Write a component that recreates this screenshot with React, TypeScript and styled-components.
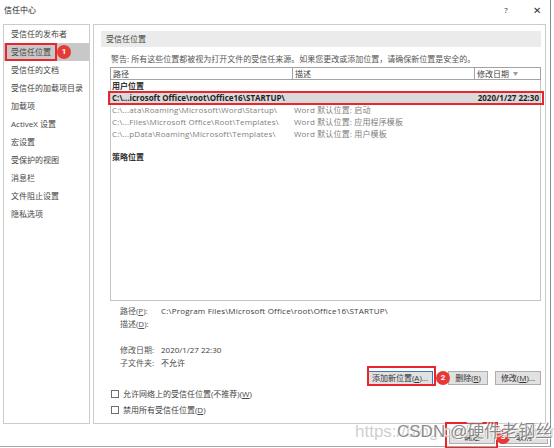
import React from "react";
import styled, { createGlobalStyle } from "styled-components";

const GlobalStyle = createGlobalStyle`
  html, body { margin: 0; padding: 0; background: #fff; }
  body {
    width: 554px; height: 448px; overflow: hidden;
    font-family: "Open Sans", "Noto Sans CJK SC", sans-serif;
    font-size: 8px; color: #3c3c3c;
  }
`;

const Window = styled.div`
  position: relative;
  width: 551px;
  height: 447px;
  box-sizing: border-box;
  border-right: 1px solid #8c8c8c;
  border-bottom: 1px solid #a6a6a6;
  display: flex;
  flex-direction: column;
  background: #fff;
`;

const TitleBar = styled.div`
  height: 24px;
  box-sizing: border-box;
  padding: 4px 7px 0 4px;
  display: flex;
  justify-content: space-between;
  align-items: flex-start;
`;

const Title = styled.span`
  line-height: 12px;
  color: #222;
`;

const TitleButtons = styled.div`
  display: flex;
  gap: 19px;
`;

const TitleButton = styled.span<{ $size?: number }>`
  width: 12px;
  text-align: center;
  line-height: 12px;
  color: #333;
  font-size: ${(p) => p.$size ?? 8}px;
`;

const Body = styled.div`
  display: flex;
  gap: 3px;
  padding-left: 3px;
  height: 400px;
`;

const Nav = styled.div`
  width: 87px;
  box-sizing: border-box;
  border: 1px solid #cbcbcb;
  display: flex;
  flex-direction: column;
`;

const NavItem = styled.div<{ $active?: boolean }>`
  position: relative;
  height: 18px;
  line-height: 18px;
  padding-left: 7px;
  color: #444;
  background: ${(p) => (p.$active ? "#c8c8c8" : "transparent")};
`;

const RedBox = styled.span`
  position: absolute;
  box-sizing: border-box;
  border: 2px solid #e8262b;
  pointer-events: none;
`;

const Badge = styled.span`
  position: absolute;
  width: 14px;
  height: 14px;
  border-radius: 50%;
  background: #e53a35;
  color: #fff;
  font-size: 8px;
  font-weight: 700;
  line-height: 14px;
  text-align: center;
  font-family: Roboto, "Noto Sans", sans-serif;
  z-index: 3;
`;

const Main = styled.div`
  width: 453px;
  box-sizing: border-box;
  border: 1px solid #cbcbcb;
  padding: 6px 4px 0 7px;
  display: flex;
  flex-direction: column;
`;

const SectionHeader = styled.div`
  height: 16px;
  line-height: 16px;
  background: #ebebeb;
  padding-left: 5px;
  color: #444;
`;

const Warning = styled.div`
  margin: 6px 0 0 10px;
  line-height: 12px;
  color: #555;
`;

const ListBox = styled.div`
  margin: 2px 0 0 9px;
  height: 234px;
  box-sizing: border-box;
  border: 1px solid #c4c4c4;
  border-top: none;
  display: flex;
  flex-direction: column;
`;

const Columns = "182px 182px 1fr";

const HeaderRow = styled.div`
  display: grid;
  grid-template-columns: ${Columns};
  height: 13px;
  box-sizing: border-box;
  border: 1px solid #a3a3a3;
  margin-left: -1px;
  margin-right: -1px;
`;

const HeaderCell = styled.div<{ $last?: boolean }>`
  padding-left: 2px;
  line-height: 11px;
  color: #444;
  border-right: ${(p) => (p.$last ? "none" : "1px solid #a3a3a3")};
  display: flex;
  align-items: center;
  gap: 4px;
`;

const SortArrow = styled.span`
  color: #9a9a9a;
  font-size: 5px;
`;

const GroupLabel = styled.div<{ $gap?: number }>`
  height: 12px;
  line-height: 12px;
  padding-left: 1px;
  margin-top: ${(p) => p.$gap ?? 0}px;
  font-weight: 600;
  color: #333;
`;

const Row = styled.div<{ $selected?: boolean }>`
  position: relative;
  display: grid;
  grid-template-columns: ${Columns};
  height: 12px;
  line-height: 12px;
  padding-left: 1px;
  color: ${(p) => (p.$selected ? "#1e1e1e" : "#808080")};
  font-weight: ${(p) => (p.$selected ? 700 : 400)};
  letter-spacing: ${(p) => (p.$selected ? "0" : "0.15px")};
  background: ${(p) => (p.$selected ? "#dadada" : "transparent")};
`;

const Cell = styled.span<{ $right?: boolean }>`
  white-space: nowrap;
  overflow: visible;
  text-align: ${(p) => (p.$right ? "right" : "left")};
  padding-right: ${(p) => (p.$right ? "1px" : "0")};
`;

const Details = styled.div`
  margin: 3px 0 0 19px;
  display: grid;
  grid-template-columns: 41px 1fr;
  grid-auto-rows: 13px;
  line-height: 13px;
`;

const DetailLabel = styled.span`
  color: #555;
`;

const DetailValue = styled.span<{ $wide?: boolean }>`
  color: #3c3c3c;
  letter-spacing: ${(p) => (p.$wide ? "0.2px" : "0")};
  white-space: nowrap;
`;

const Spacer = styled.div`
  height: 11px;
  grid-column: 1 / -1;
`;

const ButtonRow = styled.div`
  display: flex;
  justify-content: flex-end;
  margin-top: 2px;
  height: 14px;
`;

const ButtonWrap = styled.span<{ $ml?: number }>`
  position: relative;
  display: inline-flex;
  margin-left: ${(p) => p.$ml ?? 0}px;
`;

const Button = styled.button<{ $w: number; $focus?: boolean }>`
  width: ${(p) => p.$w}px;
  height: 14px;
  padding: 0;
  box-sizing: border-box;
  background: #e1e1e1;
  border: 1px solid ${(p) => (p.$focus ? "#3478c0" : "#adadad")};
  font: inherit;
  font-size: 8px;
  line-height: 12px;
  color: #333;
  white-space: nowrap;
`;

const U = styled.span`
  text-decoration: underline;
`;

const Checks = styled.div`
  margin: 3px 0 0 10px;
  display: flex;
  flex-direction: column;
  gap: 4px;
`;

const CheckRow = styled.label`
  display: flex;
  align-items: center;
  gap: 4px;
  height: 12px;
  line-height: 12px;
  color: #444;
`;

const Box = styled.span`
  width: 8px;
  height: 8px;
  box-sizing: border-box;
  border: 1px solid #6e6e6e;
  background: #fff;
`;

const Footer = styled.div`
  flex: 1;
  display: flex;
  justify-content: flex-end;
  align-items: flex-start;
  gap: 5px;
  padding: 6px 2px 0 0;
`;

const Watermark = styled.div`
  position: absolute;
  left: 355px;
  top: 420px;
  height: 24px;
  white-space: nowrap;
  pointer-events: none;
  z-index: 4;
  font-family: "Liberation Sans", Arial, "Noto Sans CJK SC", sans-serif;
  font-size: 17px;
  line-height: 24px;
`;

const WmUrl = styled.span`
  color: rgba(190, 190, 190, 0.75);
  text-shadow: 0 0 1px #fff;
`;

const WmName = styled.span`
  position: absolute;
  left: 42px;
  top: 0;
  color: rgba(110, 110, 110, 0.8);
  text-shadow: 1px 1px 0 rgba(255,255,255,0.8), -1px -1px 0 rgba(255,255,255,0.8);
`;

const navItems = [
  "受信任的发布者",
  "受信任位置",
  "受信任的文档",
  "受信任的加载项目录",
  "加载项",
  "ActiveX 设置",
  "宏设置",
  "受保护的视图",
  "消息栏",
  "文件阻止设置",
  "隐私选项",
];

const otherRows = [
  ["C:\\...ata\\Roaming\\Microsoft\\Word\\Startup\\", "Word 默认位置: 启动"],
  ["C:\\...Files\\Microsoft Office\\Root\\Templates\\", "Word 默认位置: 应用程序模板"],
  ["C:\\...pData\\Roaming\\Microsoft\\Templates\\", "Word 默认位置: 用户模板"],
];

export default function App() {
  return (
    <>
      <GlobalStyle />
      <Window>
        <TitleBar>
          <Title>信任中心</Title>
          <TitleButtons>
            <TitleButton>?</TitleButton>
            <TitleButton $size={10}>✕</TitleButton>
          </TitleButtons>
        </TitleBar>
        <Body>
          <Nav>
            {navItems.map((t, i) => (
              <NavItem key={t} $active={i === 1}>
                {t}
                {i === 1 && (
                  <>
                    <RedBox style={{ left: 1, top: 0, width: 52, height: 18 }} />
                    <Badge style={{ left: 53, top: 2 }}>1</Badge>
                  </>
                )}
              </NavItem>
            ))}
          </Nav>
          <Main>
            <SectionHeader>受信任位置</SectionHeader>
            <Warning>
              警告: 所有这些位置都被视为打开文件的受信任来源。如果您更改或添加位置，请确保新位置是安全的。
            </Warning>
            <ListBox>
              <HeaderRow>
                <HeaderCell>路径</HeaderCell>
                <HeaderCell>描述</HeaderCell>
                <HeaderCell $last>
                  修改日期 <SortArrow>▼</SortArrow>
                </HeaderCell>
              </HeaderRow>
              <GroupLabel>用户位置</GroupLabel>
              <Row $selected>
                <Cell>C:\...icrosoft Office\root\Office16\STARTUP\</Cell>
                <Cell />
                <Cell $right>2020/1/27 22:30</Cell>
                <RedBox style={{ left: -3, top: -1, right: -4, bottom: -1 }} />
              </Row>
              {otherRows.map(([p, d]) => (
                <Row key={p}>
                  <Cell>{p}</Cell>
                  <Cell>{d}</Cell>
                  <Cell />
                </Row>
              ))}
              <GroupLabel $gap={11}>策略位置</GroupLabel>
            </ListBox>
            <Details>
              <DetailLabel>
                路径(<U>P</U>):
              </DetailLabel>
              <DetailValue $wide>C:\Program Files\Microsoft Office\root\Office16\STARTUP\</DetailValue>
              <DetailLabel>
                描述(<U>D</U>):
              </DetailLabel>
              <DetailValue />
              <Spacer />
              <DetailLabel>修改日期:</DetailLabel>
              <DetailValue>2020/1/27 22:30</DetailValue>
              <DetailLabel>子文件夹:</DetailLabel>
              <DetailValue>不允许</DetailValue>
            </Details>
            <ButtonRow>
              <ButtonWrap>
                <Button $w={66} $focus>
                  添加新位置(<U>A</U>)...
                </Button>
                <RedBox style={{ left: 0, top: -5, right: -3, bottom: -1 }} />
                <Badge style={{ left: 69, top: 0 }}>2</Badge>
              </ButtonWrap>
              <ButtonWrap $ml={15}>
                <Button $w={40}>
                  删除(<U>R</U>)
                </Button>
              </ButtonWrap>
              <ButtonWrap $ml={7}>
                <Button $w={46}>
                  修改(<U>M</U>)...
                </Button>
              </ButtonWrap>
            </ButtonRow>
            <Checks>
              <CheckRow>
                <Box />
                <span>
                  允许网络上的受信任位置(不推荐)(<U>W</U>)
                </span>
              </CheckRow>
              <CheckRow>
                <Box />
                <span>
                  禁用所有受信任位置(<U>D</U>)
                </span>
              </CheckRow>
            </Checks>
          </Main>
        </Body>
        <Footer>
          <ButtonWrap>
            <Button $w={46}>确定</Button>
            <RedBox style={{ left: -4, top: -8, right: -3, bottom: -5 }} />
            <Badge style={{ left: 47, top: 0 }}>3</Badge>
          </ButtonWrap>
          <ButtonWrap>
            <Button $w={48}>取消</Button>
          </ButtonWrap>
        </Footer>
        <Watermark>
          <WmUrl>https://blog.csdn.net/weixin_4</WmUrl>
          <WmName>CSDN @硬件老钢丝</WmName>
        </Watermark>
      </Window>
    </>
  );
}
